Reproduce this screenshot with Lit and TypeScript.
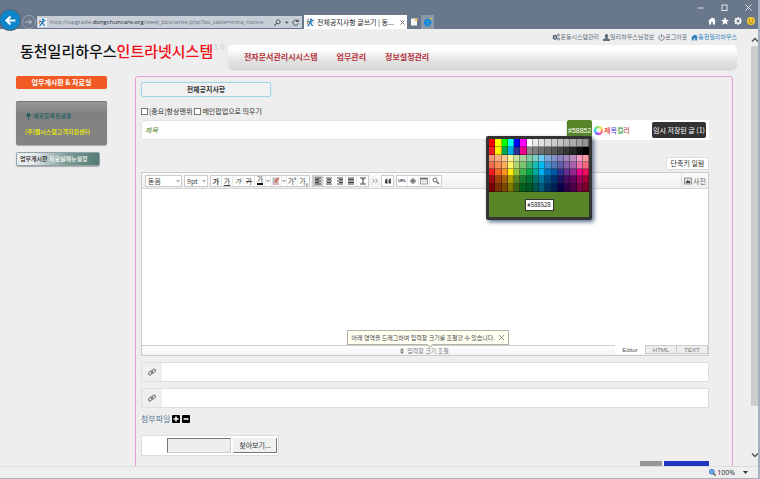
import { LitElement, html, css, svg } from "lit";
import { customElement, state } from "lit/decorators.js";
import { classMap } from "lit/directives/class-map.js";

const ROWS: string[][] = [
  "ff0000 ffff00 00ff00 00ffff 0000ff ff00ff ffffff ebebeb e1e1e1 d7d7d7 cccccc c2c2c2 b7b7b7 acacac a0a0a0 959595",
  "ee1d24 fff100 00a650 00aeef 2f3192 ed008c 898989 7d7d7d 707070 626262 555555 464646 363636 262626 111111 000000",
  "f7977a fbad82 fdc68c fff799 c6df9c a4d49d 81ca9d 7bcdc9 6ccff7 7ca6d8 8293ca 8881be a286bd bc8cbf f49bc1 f5999d",
  "f16c4d f68e54 fbaf5a fff467 acd372 7dc473 39b778 16bcb4 00bff3 438ccb 5573b7 5e5ca7 855fa8 a763a9 ef6ea8 f16d7e",
  "ee1d24 f16522 f7941d fff100 8fc63d 37b44a 00a650 00a99e 00aeef 0072bc 0054a5 2f3192 652c91 91278f ed008c ee105a",
  "9d0a0f a1410d a36209 aba000 588528 197b30 007236 00736a 0076a4 004a80 003370 1d1363 450e61 62055f 9e005c 9d0039",
  "790000 7b3000 7c4900 827a00 3e6617 045f20 005824 005951 005b7e 003562 002056 0c004b 30004a 4b0048 7a0045 7a0026",
].map((row) => row.split(" ").map((hex) => `#${hex}`));

const siteMark = html`<svg class="i9" viewBox="0 0 18 18" aria-hidden="true">
  <rect width="18" height="18" fill="#eef3f8" />
  <path d="M2 6L9 8L15 4M9 8L7 12L3 16M9 9L13 16" stroke="#2176b8" stroke-width="2.4" fill="none" />
  <circle cx="10" cy="3.4" r="2.2" fill="#2176b8" />
  <circle cx="3" cy="10" r="1.8" fill="#ef8a3a" /><circle cx="4" cy="3" r="1.3" fill="#e25d6b" />
</svg>`;

const homePath = svg`<path d="M8 1L0 8h2v7h4.500v-5h3v5H14V8h2L13 5.300V2h-2v1.600z" />`;
const gearPath = svg`<path fill-rule="evenodd" d="M7 0h2l.5 2.200 1.500.6L13 1.600 14.500 3l-1.300 2 .6 1.500L16 7v2l-2.200.5-.6 1.500 1.300 2L13 14.500l-2-1.300-1.500.6L9 16H7l-.5-2.200-1.500-.6-2 1.300L1.500 13l1.300-2-.6-1.500L0 9V7l2.200-.5.6-1.500-1.300-2L3 1.600l2 1.200 1.500-.6zM8 5a3 3 0 100 6 3 3 0 000-6z" />`;
const cogsPath = svg`<path fill-rule="evenodd" d="M5 3h2l.5 1.500L9 4l1.300 1.500-.7 1.300L11 7.500v2l-1.500.5.5 1.500L8.700 13l-1.400-.7L7 14H5l-.5-1.700-1.400.7L1.700 11.500l.6-1.500L1 9.500v-2L2.400 7l-.7-1.500L3 4l1.500.6zM6 7a1.500 1.500 0 100 3 1.500 1.500 0 000-3z" /><circle cx="13" cy="4" r="2" fill="none" stroke="currentColor" stroke-width="1.800" /><circle cx="13" cy="12" r="2" fill="none" stroke="currentColor" stroke-width="1.800" />`;
const magnifier = svg`<circle cx="9.500" cy="6.500" r="4.500" fill="none" stroke="currentColor" stroke-width="2" /><path d="M6 10L1 15" stroke="currentColor" stroke-width="2.500" />`;

const icon = (cls: string, body: unknown) =>
  html`<svg class=${cls} viewBox="0 0 16 16" fill="currentColor" aria-hidden="true">${body}</svg>`;

const lines = (widths: [number, number][]) =>
  widths.map(([x, w], i) => svg`<rect x=${x} y=${1 + i * 3} width=${w} height="2" />`);

@customElement("browser-bar")
class BrowserBar extends LitElement {
  static styles = css`
    :host { display: block; background: #68778a; height: 29px; color: #fff; }
    svg { display: block; flex: none; }
    button { all: unset; display: flex; align-items: center; justify-content: center; flex: none; }
    .caption { display: flex; justify-content: flex-end; align-items: center; height: 15px; padding: 0 8px 0 0; gap: 17px; }
    .caption svg { width: 7px; height: 7px; }
    .row { display: flex; align-items: flex-end; height: 14px; }
    .back { width: 20px; height: 20px; border-radius: 50%; background: #0c86cb; margin: 0 2px -1px 0; box-shadow: 0 0 0 1px #56677c; }
    .back svg { width: 13px; height: 13px; }
    .fwd { width: 12px; height: 12px; border: 1px solid #9aa4b1; border-radius: 50%; margin-right: 1px; color: #c5ccd5; }
    .fwd svg { width: 8px; height: 8px; }
    .address { flex: 0 1 265px; display: flex; align-items: center; gap: 3px; height: 12px; background: #c8ced7; color: #3f4854; margin: 0 2px 1px 0; min-width: 0; box-sizing: border-box; padding: 0 3px 0 1px; }
    .url { flex: 1; min-width: 0; white-space: nowrap; font: 6px/12px "Open Sans", sans-serif; color: #69727e; }
    .url b { font-weight: 400; color: #20262e; }
    .i9 { width: 9px; height: 9px; }
    .i7 { width: 7px; height: 7px; }
    .i8 { width: 8px; height: 8px; }
    .tools { display: flex; align-items: center; gap: 2px; }
    .tab { display: flex; align-items: center; width: 103px; height: 14px; gap: 2px; padding: 0 2px; box-sizing: border-box; background: #fff; color: #222; font: 7px/14px "Noto Sans CJK KR", sans-serif; white-space: nowrap; }
    .tab span { flex: 1; }
    .tab svg:last-child { width: 5px; height: 5px; color: #777; }
    .newtab { width: 14px; height: 14px; }
    .ietab { width: 13px; height: 14px; background: #8b98a8; }
    .right { margin-left: auto; display: flex; gap: 5px; align-items: center; padding: 0 5px 4px 0; }
  `;
  render() {
    return html`
      <div class="caption">
        <button aria-label="minimize"><svg viewBox="0 0 14 14"><path d="M1 8h12" stroke="#dfe3e8" stroke-width="2" /></svg></button>
        <button aria-label="maximize"><svg viewBox="0 0 14 14"><rect x="2" y="2" width="10" height="11" fill="none" stroke="#dfe3e8" stroke-width="2" /></svg></button>
        <button aria-label="close"><svg viewBox="0 0 14 14"><path d="M1 1l12 12M13 1L1 13" stroke="#dfe3e8" stroke-width="2" /></svg></button>
      </div>
      <div class="row">
        <button class="back" aria-label="back"><svg viewBox="0 0 16 16"><path d="M14 8H3M8 3L3 8l5 5" fill="none" stroke="#fff" stroke-width="2.600" /></svg></button>
        <button class="fwd" aria-label="forward"><svg viewBox="0 0 16 16"><path d="M1 8h12M8 3l5 5-5 5" fill="none" stroke="currentColor" stroke-width="2" /></svg></button>
        <div class="address">
          ${siteMark}
          <span class="url">http://upgrade.<b>dongchuncare.org</b>/weel_bbs/write.php?bo_table=intra_notice</span>
          <span class="tools">
            ${icon("i7", magnifier)}
            <svg class="i7" viewBox="0 0 16 16"><path d="M4 6h9l-4.500 5z" fill="#3f4854" /></svg>
            <svg class="i7" viewBox="0 0 16 16"><path d="M13 5A6 6 0 1014 10" fill="none" stroke="#3f4854" stroke-width="2.200" /><path d="M15 0v7H8z" fill="#3f4854" /></svg>
          </span>
        </div>
        <div class="tab">${siteMark}<span>전체공지사항 글쓰기 | 동...</span>
          <svg viewBox="0 0 10 10"><path d="M1 1l8 8M9 1L1 9" stroke="currentColor" stroke-width="2" /></svg>
        </div>
        <button class="newtab" aria-label="new tab"><svg class="i8" viewBox="0 0 16 16"><path d="M2 1h9l3 3v11H2z" fill="#f5f5f2" /><circle cx="12.500" cy="3" r="3" fill="#f0c46a" /></svg></button>
        <button class="ietab" aria-label="Internet Explorer"><svg class="i9" viewBox="0 0 16 16"><path d="M13 11A5.300 5.300 0 118 2.800c3 0 5.200 2.200 5.200 5.600H4" fill="none" stroke="#0f8be0" stroke-width="3.400" /><path d="M11 1c2-.6 4-.4 4 1.500" fill="none" stroke="#f2c232" stroke-width="2" /></svg></button>
        <div class="right">
          ${icon("i8", homePath)}
          ${icon("i8", svg`<path d="M8 0l2.400 5.300 5.600.6-4.200 3.800L13 15.500 8 12.600l-5 2.900 1.200-5.800L0 5.900l5.600-.6z" />`)}
          ${icon("i8", gearPath)}
          <svg class="i8" viewBox="0 0 16 16"><circle cx="8" cy="8" r="8" fill="#f4c931" /><circle cx="5" cy="6" r="1.300" fill="#6b5410" /><circle cx="11" cy="6" r="1.300" fill="#6b5410" /><path d="M4 10c2 3 6 3 8 0" stroke="#6b5410" stroke-width="1.500" fill="none" /></svg>
        </div>
      </div>`;
  }
}

@customElement("color-picker")
class ColorPicker extends LitElement {
  static styles = css`
    :host { display: block; box-sizing: border-box; width: 106px; border: 3px solid #333; border-radius: 2px; background: #588528; box-shadow: 2px 2px 4px #5a6f8c; }
    .cells { display: grid; grid-template-columns: repeat(16, 1fr); background: #1c1c1c; gap: 0; }
    .cell { all: unset; height: 7px; box-shadow: inset -1px -1px 0 rgb(0 0 0 / 35%); }
    .tall { height: 8px; }
    .foot { display: flex; height: 25px; align-items: center; justify-content: center; }
    output { background: #fff; border: 1px solid #333; width: 27px; font: 6px/10px "Noto Sans CJK KR", sans-serif; text-align: center; color: #111; }
  `;
  render() {
    return html`
      <div class="cells">
        ${ROWS.map((row, r) => row.map((c) => html`<button class=${classMap({ cell: true, tall: r < 2 || r > 4 })} aria-label=${c} style="background:${c}"></button>`))}
      </div>
      <div class="foot"><output>#588528</output></div>`;
  }
}

@customElement("rich-editor")
class RichEditor extends LitElement {
  static styles = css`
    :host { display: block; border: 1px solid #ccc; background: #fff; font: 7px/10px "Noto Sans CJK KR", sans-serif; color: #555; }
    svg { display: block; width: 8px; height: 8px; flex: none; }
    button { all: unset; display: flex; align-items: center; justify-content: center; box-sizing: border-box; }
    .bar { display: flex; align-items: center; height: 15px; background: linear-gradient(#fbfbfb, #f0f0f0); border-bottom: 1px solid #d5d5d5; padding-left: 3px; gap: 2px; }
    .pick { position: relative; display: flex; align-items: center; }
    .pick svg { position: absolute; right: 2px; width: 4px; height: 4px; }
    select { appearance: none; width: 37px; height: 12px; margin: 0; border: 1px solid #ccc; border-radius: 0; background: #fff; font: inherit; color: #444; padding: 0 2px; }
    .size select { width: 24px; }
    .group { display: flex; border: 1px solid #ccc; height: 12px; box-sizing: border-box; background: #fff; }
    .group button { width: 11px; border-right: 1px solid #e8e8e8; color: #444; }
    .group button:last-child { border-right: 0; }
    .group .drop { width: 5px; }
    .drop svg { width: 4px; height: 4px; }
    .group .on { background: #c9c9c9; }
    .b { font-weight: 700; } .u { text-decoration: underline; } .s { text-decoration: line-through; } .i { font-style: italic; }
    .ink { border-bottom: 2px solid #111; line-height: 7px; }
    sup, sub { font-size: 4px; line-height: 4px; }
    sup { align-self: flex-start; } sub { align-self: flex-end; }
    .url { font: 700 4px/8px "Liberation Sans", sans-serif; }
    .more { width: 8px; }
    .photo { margin-left: auto; gap: 1px; padding: 0 2px; height: 15px; border-left: 1px solid #ddd; }
    textarea { display: block; box-sizing: border-box; width: 100%; height: 156px; border: 0; resize: none; outline: 0; padding: 4px; }
    .foot { display: flex; height: 9px; background: linear-gradient(#fff, #f3f3f3); border-top: 1px solid #ccc; }
    .grip { position: relative; flex: 1; padding-left: 92px; gap: 3px; font-size: 6px; color: #777; }
    .grip svg { width: 4px; height: 6px; }
    .tip { position: absolute; bottom: 10px; left: 50%; margin-left: -32px; display: flex; align-items: center; gap: 4px; padding: 0 4px; height: 13px; border: 1px solid #b5b1a3; background: #fffff2; color: #444; white-space: nowrap; }
    .tip svg { width: 5px; height: 5px; }
    .tip::after { content: ""; position: absolute; left: 50%; bottom: -3px; width: 3px; height: 3px; background: #fffff2; border: solid #b5b1a3; border-width: 0 1px 1px 0; transform: rotate(45deg); }
    .tabs { display: flex; font: 6px/8px "Liberation Sans", sans-serif; }
    .tabs button { width: 31px; height: 8px; background: #eee; border: solid #ccc; border-width: 0 1px 1px 0; color: #777; }
    .tabs .now { height: 9px; margin-top: -1px; background: #fff; border-bottom: 0; color: #555; }
  `;
  render() {
    const caret = html`<svg viewBox="0 0 8 8"><path d="M0 2h8L4 7z" fill="#aaa" /></svg>`;
    return html`
      <div class="bar">
        <label class="pick"><select aria-label="font"><option>돋움</option></select>${caret}</label>
        <label class="pick size"><select aria-label="size"><option>9pt</option></select>${caret}</label>
        <div class="group">
          <button class="b">가</button><button class="u">가</button><button class="i">가</button><button class="s">가</button>
          <button><span class="ink">가</span></button><button class="drop">${caret}</button>
          <button aria-label="highlight"><svg viewBox="0 0 16 16"><rect x="1" y="1" width="12" height="11" fill="#bbb" /><path d="M14 2L6 10" stroke="#d9503f" stroke-width="3" /><path d="M1 14h13" stroke="#c66" stroke-width="2" /></svg></button><button class="drop">${caret}</button>
          <button>가<sup>a</sup></button><button>가<sub>a</sub></button>
        </div>
        <div class="group">
          <button class="on" aria-label="left">${icon("", lines([[2, 12], [2, 8], [2, 12], [2, 8], [2, 12]]))}</button>
          <button aria-label="center">${icon("", lines([[2, 12], [4, 8], [2, 12], [4, 8], [2, 12]]))}</button>
          <button aria-label="right">${icon("", lines([[2, 12], [6, 8], [2, 12], [6, 8], [2, 12]]))}</button>
          <button aria-label="justify">${icon("", lines([[2, 12], [2, 12], [2, 12], [2, 12], [2, 12]]))}</button>
          <button aria-label="line height">${icon("", svg`<path d="M2 1h12v2H2zM2 13h12v2H2zM7 5h2v6H7zM5 6l3-3 3 3zM5 10l3 3 3-3z" />`)}</button>
        </div>
        <button class="more" aria-label="more"><svg viewBox="0 0 16 16"><path d="M3 4l4 3.500L3 11M9 4l4 3.500L9 11" fill="none" stroke="#777" stroke-width="1.500" /></svg></button>
        <div class="group"><button aria-label="quote">${icon("", svg`<path d="M2 8c0-3 2-5 5-5v2L5.500 7H7v6H2zM9 8c0-3 2-5 5-5v2l-1.500 2H14v6H9z" />`)}</button></div>
        <div class="group">
          <button class="url">URL</button>
          <button aria-label="special">${icon("", svg`<path d="M8 1l2 4 5 3-5 3-2 4-2-4-5-3 5-3z" fill="#999" /><circle cx="8" cy="8" r="4.500" fill="none" stroke="#777" stroke-width="1.500" /><circle cx="8" cy="8" r="1.500" />`)}</button>
          <button aria-label="table"><svg viewBox="0 0 16 16"><rect x="1" y="2" width="14" height="12" fill="#fff" stroke="#777" stroke-width="1.500" /><path d="M1 3.500h14" stroke="#666" stroke-width="3" /><path d="M6 4v10M10.500 4v10M1 9h14" stroke="#bbb" /></svg></button>
          <button aria-label="find"><svg viewBox="0 0 16 16"><circle cx="6" cy="6" r="4" fill="none" stroke="#666" stroke-width="2" /><path d="M9 9l5 5" stroke="#666" stroke-width="3" /></svg></button>
        </div>
        <button class="photo"><svg viewBox="0 0 16 16"><rect x="1" y="2" width="14" height="12" fill="#ddd" stroke="#777" stroke-width="1.500" /><path d="M3 12l4-6 3 3 1-2 2 5z" fill="#444" /></svg>사진</button>
      </div>
      <textarea aria-label="content"></textarea>
      <div class="foot">
        <button class="grip"><svg viewBox="0 0 8 12"><path d="M0 5l4-5 4 5zM0 7h8l-4 5z" fill="#777" /></svg>입력창 크기 조절
          <span class="tip">아래 영역을 드래그하여 입력창 크기를 조절할 수 있습니다.
            <svg viewBox="0 0 10 10"><path d="M0 0l10 10M10 0L0 10" stroke="#777" stroke-width="1.600" /></svg></span>
        </button>
        <div class="tabs"><button class="now">Editor</button><button>HTML</button><button>TEXT</button></div>
      </div>`;
  }
}

@customElement("app-root")
class AppRoot extends LitElement {
  @state() private subject = "";

  static styles = css`
    :host { display: flex; flex-direction: column; height: 100vh; box-sizing: border-box; border: solid #a5b1c1; border-width: 0 2px 1px 0; overflow: hidden; background: #eee; font: 7px/10px "Noto Sans CJK KR", sans-serif; color: #333; }
    browser-bar { margin-right: -2px; }
    a { color: inherit; text-decoration: none; }
    button { all: unset; box-sizing: border-box; text-align: center; }
    svg { display: block; flex: none; }
    .view { flex: 1; display: flex; min-height: 0; }
    .page { flex: 1; min-width: 0; overflow: hidden; }
    .head { display: flex; padding: 0 14px 7px 20px; }
    h1 { margin: 0; flex: 0 0 208px; padding-top: 12px; font-size: 15px; line-height: 20px; font-weight: 500; color: #111; white-space: nowrap; display: flex; }
    h1 em { font-style: normal; color: #f30d16; }
    h1 small { font-size: 8px; line-height: 12px; font-weight: 400; color: #ccc; }
    .top { flex: 1; min-width: 0; }
    .links { display: flex; justify-content: flex-end; align-items: center; height: 16px; gap: 4px; font-size: 6px; color: #5f6e7e; }
    .links a { display: flex; align-items: center; }
    .links .home { color: #2c83c0; }
    .i7 { width: 7px; height: 7px; }
    .i8 { width: 8px; height: 8px; }
    .nav { display: flex; align-items: center; gap: 19px; height: 24px; padding-left: 16px; border-radius: 5px; background: linear-gradient(#fff 20%, #e2e2e2 65%, #dadada); box-shadow: 0 1px 1px #ccc; font-size: 8px; font-weight: 700; color: #b5333c; }
    .cols { display: flex; align-items: flex-start; }
    .side { flex: 0 0 135px; box-sizing: border-box; padding: 0 28px 0 16px; display: flex; flex-direction: column; }
    .orange { height: 13px; line-height: 13px; background: #f15a22; border-radius: 2px; color: #fff; font-weight: 700; text-align: center; }
    .panel { margin-top: 12px; height: 44px; box-sizing: border-box; padding: 9px; border-radius: 2px; background: linear-gradient(#999, #808080 30%, #848484); box-shadow: 0 1px 1px #aaa, inset 0 1px 0 #777; font-size: 6px; line-height: 12px; display: flex; flex-direction: column; gap: 4px; white-space: nowrap; color: #1b5f63; font-weight: 500; }
    .panel a { display: flex; align-items: center; gap: 1px; }
    .panel .yellow { color: #f2f200; }
    .setup { margin: 7px 7px 0 0; height: 14px; line-height: 12px; padding-left: 3px; font-size: 6px; text-align: left; border: 1px solid #90a3ac; border-radius: 2px; background: linear-gradient(100deg, #e8ecec 20%, #7d9c93 60%, #4f7b70); box-shadow: 0 1px 1px #aaa; color: #fff; white-space: nowrap; font-weight: 500; }
    .setup b { font-weight: 500; color: #222; }
    .main { flex: 1; min-width: 0; margin-right: 18px; padding: 5px 23px 20px 5px; border: 1px solid #e79fd2; border-radius: 3px; }
    h2 { margin: 0; width: 128px; height: 13px; line-height: 13px; font-size: 7px; font-weight: 700; text-align: center; border: 1px solid #a3d5ea; border-radius: 2px; background: #f1f1f1; box-shadow: 0 0 1px #a3d5ea; }
    .checks { display: flex; gap: 2px; padding: 9px 0 4px; }
    .checks label { display: flex; align-items: center; gap: 1px; }
    .checks input { appearance: none; width: 7px; height: 7px; margin: 0; border: 1px solid #777; background: #fff; }
    .subject { position: relative; display: flex; align-items: flex-start; height: 20px; background: #fff; box-sizing: border-box; padding-right: 3px; }
    .title { flex: 1; min-width: 0; height: 20px; box-sizing: border-box; border: 1px solid #e2e2e2; border-radius: 2px; background: #fff; font: italic 7px/10px "Noto Sans CJK KR", sans-serif; padding: 0 3px; outline: 0; color: #588528; }
    .title::placeholder { color: #588528; opacity: 1; }
    .hex { width: 25px; height: 20px; box-sizing: border-box; border: 0; border-radius: 2px; background: #588528; color: #fff; font: 7px/10px "Liberation Sans", sans-serif; padding: 0 1px; outline: 0; }
    .tone { display: flex; align-items: center; gap: 1px; height: 20px; width: 60px; box-sizing: border-box; padding-left: 2px; font-weight: 500; font-size: 7px; }
    .wheel { width: 9px; height: 9px; border-radius: 50%; background: radial-gradient(#fff 15%, #fff0 60%), conic-gradient(#9d4, #fd3, #f64, #e3c, #63f, #2bf, #3d8, #9d4); }
    .c1 { color: #e8332c; } .c2 { color: #3a3ad8; } .c3 { color: #3b9c3b; } .c4 { color: #c0504d; }
    .saved { align-self: center; width: 54px; height: 16px; line-height: 16px; background: #333; border-radius: 2px; color: #fff; white-space: nowrap; }
    color-picker { position: absolute; top: 16px; right: 117px; z-index: 2; }
    .keys { display: flex; justify-content: flex-end; padding: 17px 0 2px; }
    .keys button { width: 43px; height: 13px; line-height: 11px; border: 1px solid #ddd; background: #fff; }
    .link { display: flex; margin-top: 6px; height: 20px; border: 1px solid #ddd; box-sizing: border-box; background: #fff; }
    .link span { width: 20px; display: flex; align-items: center; justify-content: center; background: #eee; color: #777; }
    .link input { flex: 1; min-width: 0; border: 0; outline: 0; background: transparent; }
    .attach { display: flex; align-items: center; gap: 2px; height: 22px; font-size: 8px; color: #5c7a94; }
    .attach svg { width: 8px; height: 8px; }
    .file { display: flex; align-items: center; gap: 2px; width: 138px; height: 21px; box-sizing: border-box; margin-top: 5px; padding-left: 25px; background: #fff; border: 1px solid #ddd; }
    .file input { width: 64px; height: 15px; box-sizing: border-box; margin: 0; padding: 0; border: 1px solid #ccc; border-color: #777 #ccc #ccc #777; background: #eee; }
    .file button { width: 44px; height: 15px; line-height: 13px; background: #f0f0f0; border: 1px solid; border-color: #eee #777 #777 #eee; }
    .actions { display: flex; justify-content: flex-end; gap: 2px; padding-top: 5px; }
    .actions button { height: 16px; line-height: 16px; width: 22px; background: #969696; color: #fff; }
    .actions .save { width: 45px; background: #2036c0; }
    .scroll { width: 7px; display: flex; flex-direction: column; align-items: center; padding: 7px 0; box-sizing: border-box; color: #555; }
    .thumb { flex: 8; width: 7px; margin-top: 2px; background: #cdcdcd; }
    .track { flex: 1; }
    .status { height: 11px; border-top: 1px solid #ddd; display: flex; align-items: center; justify-content: flex-end; gap: 1px; padding-right: 10px; font: 7px/10px "Noto Sans", sans-serif; color: #333; }
    .status .caret { width: 5px; height: 5px; margin-left: 7px; }
  `;

  render() {
    const chain = html`<svg class="i8" viewBox="0 0 16 16" fill="none" stroke="currentColor" stroke-width="2"><rect x="0.500" y="7.500" width="9" height="5" rx="2.500" transform="rotate(-45 5 10)" /><rect x="6.500" y="3.500" width="9" height="5" rx="2.500" transform="rotate(-45 11 6)" /></svg>`;
    return html`
      <browser-bar></browser-bar>
      <div class="view">
        <div class="page">
          <header class="head">
            <h1>동천일리하우스<em>인트라넷시스템</em><small>3.0</small></h1>
            <div class="top">
              <div class="links">
                <a href="#">${icon("i8", cogsPath)}운동시스템관리</a>
                <a href="#">${icon("i7", svg`<path d="M8 0a4 4 0 014 4c0 2-1 4-2 5l6 3v4H0v-4l6-3C5 8 4 6 4 4a4 4 0 014-4z" />`)}일리하우스님정보</a>
                <a href="#"><svg class="i7" viewBox="0 0 16 16" fill="none" stroke="currentColor" stroke-width="2"><path d="M4.500 3a6.200 6.200 0 107 0M8 0v8" /></svg>로그아웃</a>
                <a class="home" href="#">${icon("i7", homePath)}동천일리하우스</a>
              </div>
              <nav class="nav"><a href="#">전자문서관리시시스템</a><a href="#">업무관리</a><a href="#">정보설정관리</a></nav>
            </div>
          </header>
          <div class="cols">
            <aside class="side">
              <a class="orange" href="#">업무게시판 &amp; 자료실</a>
              <div class="panel">
                <a href="#">${icon("i7", svg`<path d="M8 0a4.500 4.500 0 011 8.900V16H7V8.900A4.500 4.500 0 018 0z" />`)}새로등록된글들</a>
                <a class="yellow" href="#">(주)웹시스템고객지원센터</a>
              </div>
              <button class="setup"><b>업무게시판</b> 자료실메뉴설정</button>
            </aside>
            <main class="main">
              <h2>전체공지사항</h2>
              <div class="checks">
                <label><input type="checkbox" />[중요]항상맨위</label>
                <label><input type="checkbox" />메인팝업으로 띄우기</label>
              </div>
              <div class="subject">
                <input class="title" aria-label="제목" placeholder="제목" .value=${this.subject} @input=${(e: Event) => (this.subject = (e.target as HTMLInputElement).value)} />
                <input class="hex" aria-label="제목컬러" value="#588528" />
                <div class="tone"><i class="wheel"></i><span><span class="c1">제</span><span class="c2">목</span><span class="c3">컬</span><span class="c4">러</span></span></div>
                <button class="saved">임시 저장된 글 (1)</button>
                <color-picker></color-picker>
              </div>
              <div class="keys"><button>단축키 일람</button></div>
              <rich-editor></rich-editor>
              <label class="link"><span>${chain}</span><input aria-label="link 1" /></label>
              <label class="link"><span>${chain}</span><input aria-label="link 2" /></label>
              <div class="attach">첨부파일
                <svg viewBox="0 0 16 16"><rect width="16" height="16" rx="2" fill="#000" /><path d="M3 8h10M8 3v10" stroke="#fff" stroke-width="3" /></svg>
                <svg viewBox="0 0 16 16"><rect width="16" height="16" rx="2" fill="#000" /><path d="M3 8h10" stroke="#fff" stroke-width="3" /></svg>
              </div>
              <div class="file"><input aria-label="첨부파일" readonly /><button>찾아보기...</button></div>
              <div class="actions"><button aria-label="cancel"></button><button class="save" aria-label="save"></button></div>
            </main>
          </div>
        </div>
        <div class="scroll">
          <svg class="i8" viewBox="0 0 16 16"><path d="M2 11l6-6 6 6" fill="none" stroke="currentColor" stroke-width="3" /></svg>
          <div class="thumb"></div>
          <div class="track"></div>
          <svg class="i8" viewBox="0 0 16 16"><path d="M2 5l6 6 6-6" fill="none" stroke="currentColor" stroke-width="3" /></svg>
        </div>
      </div>
      <footer class="status">
        <svg class="i7" viewBox="0 0 16 16"><circle cx="6.500" cy="6.500" r="5" fill="#cfe4f7" stroke="#2878c4" stroke-width="2.500" /><path d="M10 10l5 5" stroke="#444" stroke-width="3" /><path d="M4 6.500h5M6.500 4v5" stroke="#2878c4" stroke-width="1.500" /></svg>
        100%
        <svg class="caret" viewBox="0 0 10 10"><path d="M0 2h10L5 8z" fill="#333" /></svg>
      </footer>`;
  }
}
